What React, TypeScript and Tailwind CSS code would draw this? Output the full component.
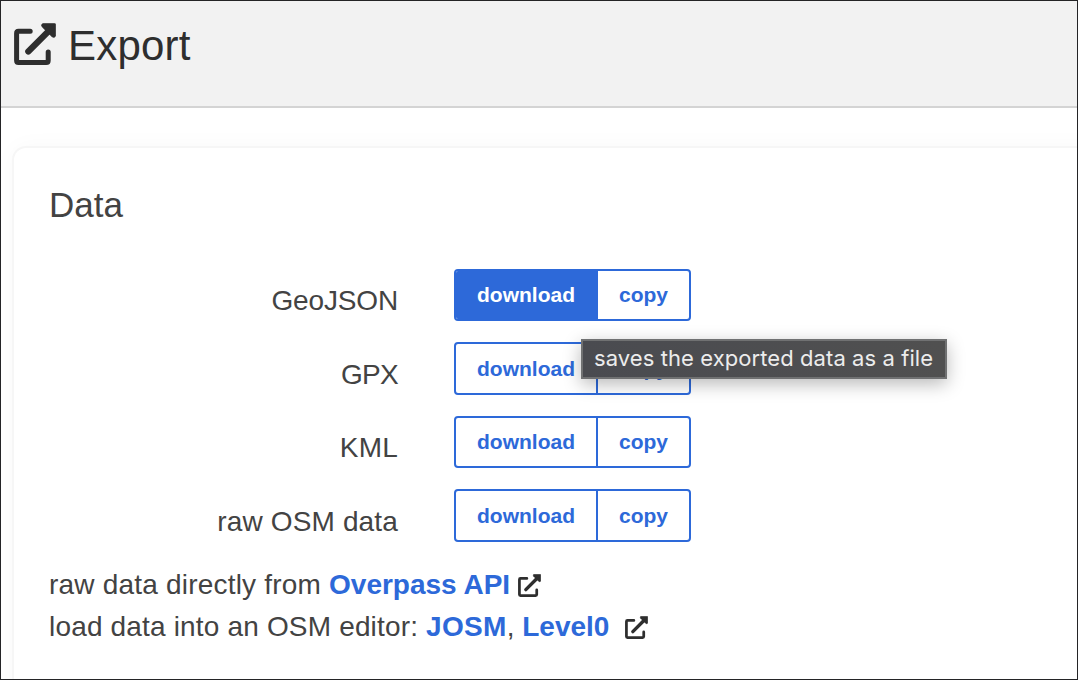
import React from "react";

function ExportIcon({ className }: { className: string }) {
  return (
    <svg viewBox="0 0 42 42" className={className} fill="none" stroke="currentColor" aria-hidden="true">
      <path d="M16.2 8.2H4.5Q2.6 8.2 2.6 10.2V37.5Q2.6 39.5 4.5 39.5H32.2Q34.2 39.5 34.2 37.5V29" strokeWidth="5" strokeLinecap="round" strokeLinejoin="round" />
      <path d="M14.3 28.5L35 7.7" strokeWidth="6.2" strokeLinecap="round" />
      <path d="M29 .5H40.5Q41.7 .5 41.7 1.7V13Q40.5 15.5 38 13.8L28.2 4Q26.3 1.5 29 .5Z" fill="currentColor" strokeWidth=".6" />
    </svg>
  );
}

const formats = [
  { name: "GeoJSON", active: true, spacing: "tracking-[-0.15px]" },
  { name: "GPX", active: false, spacing: "tracking-[-0.7px]" },
  { name: "KML", active: false, spacing: "tracking-[0.2px]" },
  { name: "raw OSM data", active: false, spacing: "tracking-[0.15px]" },
];

function FormatRow({ name, active, spacing }: { name: string; active: boolean; spacing: string }) {
  return (
    <div className="flex h-[73.4px] items-start">
      <div className={`w-[349px] pt-[16.35px] text-right leading-8 ${spacing}`}>{name}</div>
      <div className="ml-[56px] flex h-[52.4px] w-[237px] overflow-hidden rounded-[4px] border-2 border-[#2d69d9] text-[21px] leading-[48.4px] font-bold text-[#2d69d9]">
        <button className={active ? "w-[142px] border-r-2 border-[#2d69d9] bg-[#2d69d9] pt-[0.35px] text-white" : "w-[142px] border-r-2 border-[#2d69d9] pt-[0.35px]"}>
          download
        </button>
        <button className="flex-1 pt-[0.35px]">copy</button>
      </div>
    </div>
  );
}

export default function App() {
  return (
    <div className="relative flex h-[680px] w-[1078px] flex-col overflow-hidden border border-[#242426] bg-white font-['Liberation_Sans',Arial,sans-serif] text-[28px] text-[#434343]">
      <header className="flex h-[107px] shrink-0 items-start border-b-2 border-[#d4d4d4] bg-[#f2f2f2] text-[#2e2e2e]">
        <ExportIcon className="mt-[22px] ml-[13px] size-[42px]" />
        <h1 className="mt-[20px] ml-[12px] text-[42px] leading-[50px] tracking-[0.2px]">Export</h1>
      </header>
      <main className="mt-[40px] ml-[13px] h-[600px] w-[1100px] shrink-0 rounded-[12px] bg-white pl-[35px] shadow-[0_0_0_2px_#f6f6f6,0_0_24px_rgba(0,0,0,0.035)]">
        <h2 className="pt-[36px] text-[35px] leading-[42px]">Data</h2>
        <div className="mt-[43px]">
          {formats.map((format) => (
            <FormatRow key={format.name} {...format} />
          ))}
        </div>
        <div className="mt-[1.4px] leading-[42px]">
          <div className="flex items-center">
            <span className="tracking-[0.2px] whitespace-pre">raw data directly from </span>
            <a className="font-bold text-[#2d69d9]">Overpass API</a>
            <ExportIcon className="mt-px ml-[8px] size-[23px] text-[#2e2e2e]" />
          </div>
          <div className="flex items-center">
            <span className="tracking-[0.17px] whitespace-pre">load data into an OSM editor: </span>
            <a className="font-bold tracking-[0.3px] text-[#2d69d9]">JOSM</a>
            <span className="whitespace-pre">, </span>
            <a className="font-bold text-[#2d69d9]">Level0</a>
            <ExportIcon className="mt-px ml-[15.5px] size-[23px] text-[#2e2e2e]" />
          </div>
        </div>
      </main>
      <div role="tooltip" className="absolute top-[338px] left-[580px] h-[40px] w-[366px] border-2 border-[#707172] bg-linear-to-r from-[#4a4b50] to-[#505050] pl-[11px] font-['Inter',sans-serif] text-[22px] leading-[35px] tracking-[0.08px] whitespace-nowrap text-[#ececec] shadow-[0_5px_18px_rgba(0,0,0,0.28)]">
        saves the exported data as a file
      </div>
    </div>
  );
}
